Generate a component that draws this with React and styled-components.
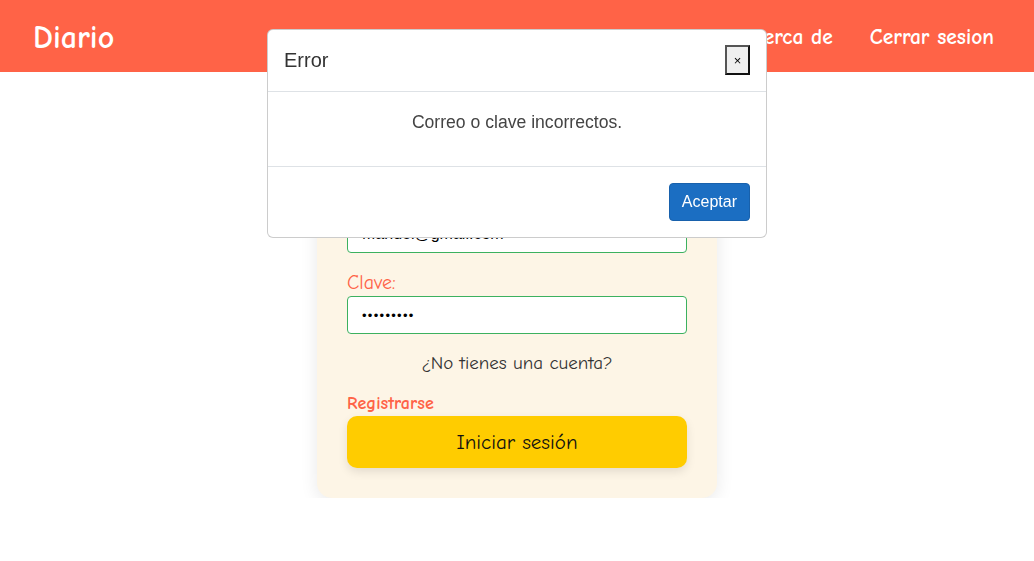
import React from 'react';
import styled, { createGlobalStyle } from 'styled-components';

const GlobalStyle = createGlobalStyle`
    body {
        margin: 0;
        background: #ffffff;
        font-family: "Comic Sans MS", "Comic Neue", "DejaVu Sans", sans-serif;
    }
`;

const Navbar = styled.nav`
    height: 72px;
    background-color: #ff6347;
    display: flex;
    align-items: center;
    justify-content: space-between;
    padding: 0 40px 0 33px;
`;

const Brand = styled.div`
    color: white;
    font-size: 32px;
    font-weight: bold;
    margin-top: 3px;
`;

const NavLinks = styled.div`
    display: flex;
    gap: 37px;
    margin-top: 2px;
`;

const NavLink = styled.a`
    color: white;
    font-size: 21.5px;
    font-weight: bold;
    text-decoration: none;
`;

const Main = styled.main`
    display: flex;
    justify-content: center;
    padding-top: 88px;
`;

const Card = styled.div`
    width: 400px;
    box-sizing: border-box;
    padding: 30px;
    background-color: #fdf5e6;
    border-radius: 15px;
    box-shadow: 0 4px 18px rgba(0, 0, 0, 0.09);
    display: flex;
    flex-direction: column;
`;

const Label = styled.label`
    color: #ff6347;
    font-size: 20px;
    line-height: 24px;
    margin-top: ${props => (props.first ? '0' : '18px')};
    margin-bottom: 1px;
`;

const Input = styled.input`
    height: 38px;
    box-sizing: border-box;
    border: 1px solid #3cb15f;
    border-radius: 4px;
    padding: 6px 14px;
    font-size: ${props => (props.type === 'password' ? '13px' : '16px')};
    font-family: "Liberation Sans", Arial, sans-serif;
    letter-spacing: ${props => (props.type === 'password' ? '1.3px' : 'normal')};
    background: white;
    outline: none;
`;

const Question = styled.p`
    text-align: center;
    color: #333;
    font-size: 19px;
    line-height: 26px;
    margin: 16px 0 0;
`;

const RegisterLink = styled.a`
    color: #ff6347;
    font-weight: bold;
    font-size: 18px;
    line-height: 22px;
    margin-top: 17px;
    text-decoration: none;
`;

const LoginButton = styled.button`
    height: 52px;
    margin-top: 1px;
    border: none;
    border-radius: 10px;
    background-color: #ffcc00;
    color: #111;
    font-family: inherit;
    font-size: 21px;
    box-shadow: 0 4px 10px rgba(0, 0, 0, 0.1);
`;

const Modal = styled.div`
    position: fixed;
    top: 29px;
    left: 50%;
    transform: translateX(-50%);
    width: 500px;
    box-sizing: border-box;
    background: white;
    border: 1px solid rgba(0, 0, 0, 0.2);
    border-radius: 6px;
    font-family: "Liberation Sans", Arial, sans-serif;
    color: #333;
`;

const ModalHeader = styled.div`
    display: flex;
    justify-content: space-between;
    align-items: center;
    padding: 15px 16px 16px 16px;
    border-bottom: 1px solid #dee2e6;
`;

const ModalTitle = styled.h5`
    margin: 0;
    font-size: 20px;
    font-weight: normal;
    color: #333;
`;

const CloseButton = styled.button`
    width: 25px;
    height: 30px;
    padding: 0;
    background: #efefef;
    border: 2px solid;
    border-color: #555 #111 #111 #555;
    font-size: 13px;
    color: #000;
`;

const ModalBody = styled.div`
    padding: 16px 16px 2px;
    text-align: center;
    font-size: 17.6px;
    color: #444;

    p {
        margin: 2px 0 30px;
        line-height: 24px;
    }
`;

const ModalFooter = styled.div`
    display: flex;
    justify-content: flex-end;
    padding: 12px;
    border-top: 1px solid #dee2e6;
`;

const AcceptButton = styled.button`
    margin: 4px;
    height: 38px;
    padding: 0 12px;
    background-color: #1b6ec2;
    border: 1px solid #1861ac;
    border-radius: 4px;
    color: white;
    font-family: inherit;
    font-size: 16px;
`;

const App = () => (
    <>
        <GlobalStyle />
        <Navbar>
            <Brand>Diario</Brand>
            <NavLinks>
                <NavLink href="#">Acerca de</NavLink>
                <NavLink href="#">Cerrar sesion</NavLink>
            </NavLinks>
        </Navbar>
        <Main>
            <Card>
                <Label first>Correo:</Label>
                <Input type="email" defaultValue="Manuel@gmail.com" />
                <Label>Clave:</Label>
                <Input type="password" defaultValue="123456789" />
                <Question>¿No tienes una cuenta?</Question>
                <RegisterLink href="#">Registrarse</RegisterLink>
                <LoginButton>Iniciar sesión</LoginButton>
            </Card>
        </Main>
        <Modal>
            <ModalHeader>
                <ModalTitle>Error</ModalTitle>
                <CloseButton>×</CloseButton>
            </ModalHeader>
            <ModalBody>
                <p>Correo o clave incorrectos.</p>
            </ModalBody>
            <ModalFooter>
                <AcceptButton>Aceptar</AcceptButton>
            </ModalFooter>
        </Modal>
    </>
);

export default App;
